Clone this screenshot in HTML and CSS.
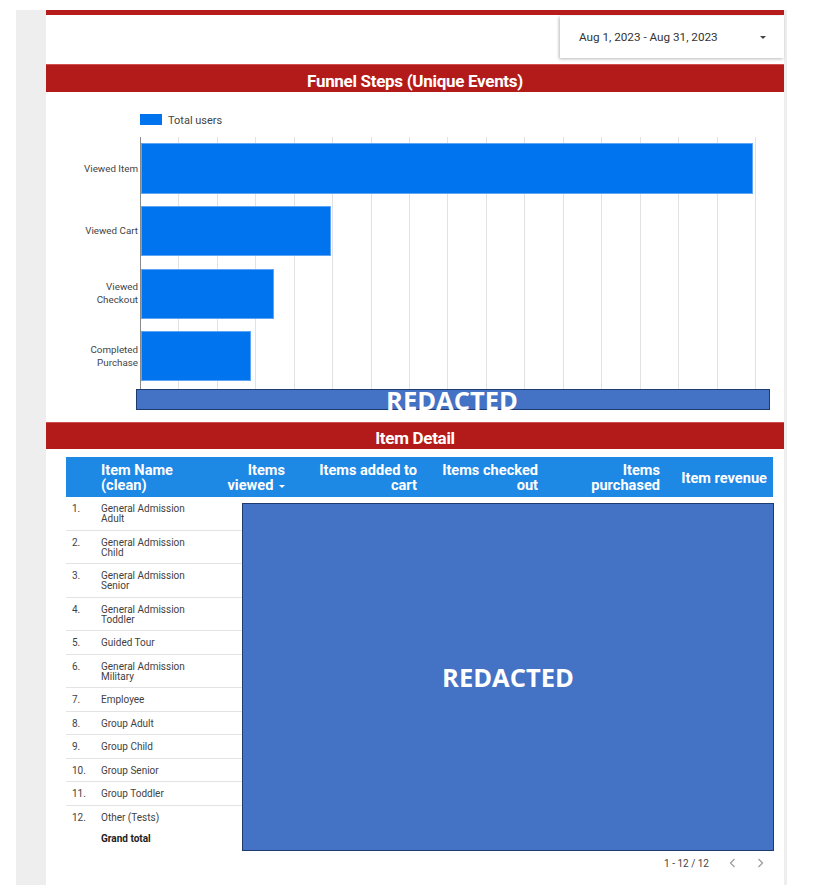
FILE: index.html
```html
<!DOCTYPE html>
<html>
<head>
<meta charset="utf-8">
<link rel="stylesheet" href="styles.css">
</head>
<body>
<div class="canvas">
  <div class="report">
    <div class="topbar"></div>
    <div class="toprow">
      <div class="datepicker">
        <span class="date-text">Aug 1, 2023 - Aug 31, 2023</span>
        <span class="caret"></span>
      </div>
    </div>
    <div class="section-title funnel-title">Funnel Steps (Unique Events)</div>
    <div class="chart">
      <svg class="chart-svg" width="738" height="330" viewBox="0 0 738 330">
        <rect x="94" y="22" width="22" height="11" fill="#0073ee"/>
        <text x="122" y="32" class="legend">Total users</text>
        <g stroke="#e2e2e2" stroke-width="1">
          <line x1="132.5" y1="45" x2="132.5" y2="297"/>
          <line x1="171.5" y1="45" x2="171.5" y2="297"/>
          <line x1="209.5" y1="45" x2="209.5" y2="297"/>
          <line x1="248.5" y1="45" x2="248.5" y2="297"/>
          <line x1="286.5" y1="45" x2="286.5" y2="297"/>
          <line x1="325.5" y1="45" x2="325.5" y2="297"/>
          <line x1="363.5" y1="45" x2="363.5" y2="297"/>
          <line x1="401.5" y1="45" x2="401.5" y2="297"/>
          <line x1="440.5" y1="45" x2="440.5" y2="297"/>
          <line x1="478.5" y1="45" x2="478.5" y2="297"/>
          <line x1="517.5" y1="45" x2="517.5" y2="297"/>
          <line x1="555.5" y1="45" x2="555.5" y2="297"/>
          <line x1="594.5" y1="45" x2="594.5" y2="297"/>
          <line x1="632.5" y1="45" x2="632.5" y2="297"/>
          <line x1="671.5" y1="45" x2="671.5" y2="297"/>
          <line x1="709.5" y1="45" x2="709.5" y2="297"/>
        </g>
        <g fill="#0073ee" stroke="#5ea6f4" stroke-width="1">
          <rect x="95.5" y="51.5" width="611" height="50"/>
          <rect x="95.5" y="114.5" width="189" height="49"/>
          <rect x="95.5" y="177.5" width="132" height="49"/>
          <rect x="95.5" y="239.5" width="109" height="49"/>
        </g>
        <line x1="94.5" y1="45" x2="94.5" y2="297" stroke="#8a8a8a" stroke-width="1"/>
        <g class="axis-label" text-anchor="end">
          <text x="92" y="80">Viewed Item</text>
          <text x="92" y="142">Viewed Cart</text>
          <text x="92" y="198">Viewed</text>
          <text x="92" y="211">Checkout</text>
          <text x="92" y="261">Completed</text>
          <text x="92" y="274">Purchase</text>
        </g>
        <rect x="90.5" y="297.5" width="633" height="20" fill="#4472c4" stroke="#1f3a6e" stroke-width="1"/>
        <text x="406" y="318" text-anchor="middle" class="redacted-text">REDACTED</text>
      </svg>
    </div>
    <div class="section-title">Item Detail</div>
    <div class="table-wrap">
      <div class="table">
        <div class="row thead">
          <div class="cell num"></div>
          <div class="cell name">Item Name<br>(clean)</div>
          <div class="cell metric">Items<br>viewed <span class="sort"></span></div>
          <div class="cell metric">Items added to<br>cart</div>
          <div class="cell metric">Items checked<br>out</div>
          <div class="cell metric">Items<br>purchased</div>
          <div class="cell metric">Item revenue</div>
        </div>
        <div class="row body"><div class="cell num">1.</div><div class="cell name">General Admission<br>Adult</div></div>
        <div class="row body"><div class="cell num">2.</div><div class="cell name">General Admission<br>Child</div></div>
        <div class="row body"><div class="cell num">3.</div><div class="cell name">General Admission<br>Senior</div></div>
        <div class="row body"><div class="cell num">4.</div><div class="cell name">General Admission<br>Toddler</div></div>
        <div class="row body"><div class="cell num">5.</div><div class="cell name">Guided Tour</div></div>
        <div class="row body"><div class="cell num">6.</div><div class="cell name">General Admission<br>Military</div></div>
        <div class="row body"><div class="cell num">7.</div><div class="cell name">Employee</div></div>
        <div class="row body"><div class="cell num">8.</div><div class="cell name">Group Adult</div></div>
        <div class="row body"><div class="cell num">9.</div><div class="cell name">Group Child</div></div>
        <div class="row body"><div class="cell num">10.</div><div class="cell name">Group Senior</div></div>
        <div class="row body"><div class="cell num">11.</div><div class="cell name">Group Toddler</div></div>
        <div class="row body last"><div class="cell num">12.</div><div class="cell name">Other (Tests)</div></div>
        <div class="row total"><div class="cell num"></div><div class="cell name">Grand total</div></div>
        <div class="redacted-box">REDACTED</div>
      </div>
      <div class="pager">
        <span class="pager-text">1 - 12 / 12</span>
        <span class="pager-btn">
          <svg width="7" height="10" viewBox="0 0 7 10"><polyline points="5.5,1 1.5,5 5.5,9" fill="none" stroke="#9e9e9e" stroke-width="1.3"/></svg>
        </span>
        <span class="pager-btn last-btn">
          <svg width="7" height="10" viewBox="0 0 7 10"><polyline points="1.5,1 5.5,5 1.5,9" fill="none" stroke="#9e9e9e" stroke-width="1.3"/></svg>
        </span>
      </div>
    </div>
  </div>
</div>
</body>
</html>
```
FILE: styles.css
```css
html, body {
  margin: 0;
  padding: 0;
  background: #ffffff;
}
body {
  font-family: Roboto, "Liberation Sans", sans-serif;
  color: #333;
}
.canvas {
  margin: 10px 0 0 16px;
  width: 771px;
  height: 875px;
  box-sizing: border-box;
  padding: 0 3px 0 30px;
  background: #eeeeee;
}
.report {
  width: 738px;
  height: 875px;
  background: #ffffff;
  display: flex;
  flex-direction: column;
}
.topbar {
  height: 5px;
  background: #b71c1c;
}
.toprow {
  height: 49px;
  display: flex;
  justify-content: flex-end;
  align-items: flex-start;
}
.datepicker {
  margin-top: 1px;
  width: 224px;
  height: 42px;
  box-sizing: border-box;
  padding: 0 18px 0 19px;
  display: flex;
  align-items: center;
  justify-content: space-between;
  background: #fff;
  box-shadow: -1px 1px 3px rgba(0,0,0,0.28);
}
.date-text {
  font-size: 11.7px;
  color: #333;
}
.caret {
  width: 0;
  height: 0;
  border-left: 3px solid transparent;
  border-right: 3px solid transparent;
  border-top: 3px solid #444;
}
.section-title {
  height: 27px;
  box-sizing: border-box;
  padding-top: 4px;
  background: #b31b1b;
  border-top: 1px solid #d0504f;
  color: #fff;
  font-weight: 700;
  font-size: 17px;
  letter-spacing: -0.3px;
  display: flex;
  align-items: center;
  justify-content: center;
}
.funnel-title {
  height: 28px;
}
.chart {
  height: 330px;
}
.chart-svg {
  display: block;
}
.legend {
  font-family: Roboto, sans-serif;
  font-size: 11px;
  fill: #444;
}
.axis-label text {
  font-family: Roboto, sans-serif;
  font-size: 9.8px;
  fill: #444;
}
.redacted-text {
  font-family: "Open Sans", sans-serif;
  font-weight: 700;
  font-size: 25.5px;
  fill: #fff;
}
.table-wrap {
  padding: 8px 11px 0 20px;
}
.table {
  position: relative;
}
.row {
  display: grid;
  grid-template-columns: 30px 104px 91px 132px 121px 122px 107px;
}
.thead {
  height: 40px;
  box-sizing: border-box;
  padding-top: 2px;
  background: #1e88e5;
  color: #fff;
  font-weight: 700;
  font-size: 14.6px;
  line-height: 15px;
  align-items: center;
}
.thead .name {
  padding-left: 5px;
}
.thead .metric {
  text-align: right;
  padding-right: 6px;
  white-space: nowrap;
}
.sort {
  display: inline-block;
  vertical-align: middle;
  margin-left: 2px;
  width: 0;
  height: 0;
  border-left: 3px solid transparent;
  border-right: 3px solid transparent;
  border-top: 3px solid #fff;
}
.body {
  font-size: 10px;
  line-height: 10px;
  color: #424242;
  padding: 7px 0 5.5px;
  border-bottom: 1px solid #e3e3e3;
}
.body.last {
  border-bottom: none;
}
.body .num {
  padding-left: 6px;
}
.body .name, .total .name {
  padding-left: 5px;
}
.total {
  font-size: 10px;
  line-height: 10px;
  font-weight: 700;
  color: #212121;
  padding: 6px 0 4px;
}
.redacted-box {
  position: absolute;
  left: 176px;
  top: 46px;
  width: 532px;
  height: 348px;
  box-sizing: border-box;
  background: #4472c4;
  border: 1px solid #1f3a6e;
  color: #fff;
  font-family: "Open Sans", sans-serif;
  font-weight: 700;
  font-size: 25.5px;
  display: flex;
  align-items: center;
  justify-content: center;
}
.pager {
  margin-top: 5px;
  height: 20px;
  display: flex;
  justify-content: flex-end;
  align-items: center;
  font-size: 10px;
  color: #444;
}
.pager-text {
  margin-right: 9px;
}
.pager-btn {
  width: 28px;
  display: flex;
  justify-content: center;
}
.last-btn {
  margin-right: -1px;
}
```
